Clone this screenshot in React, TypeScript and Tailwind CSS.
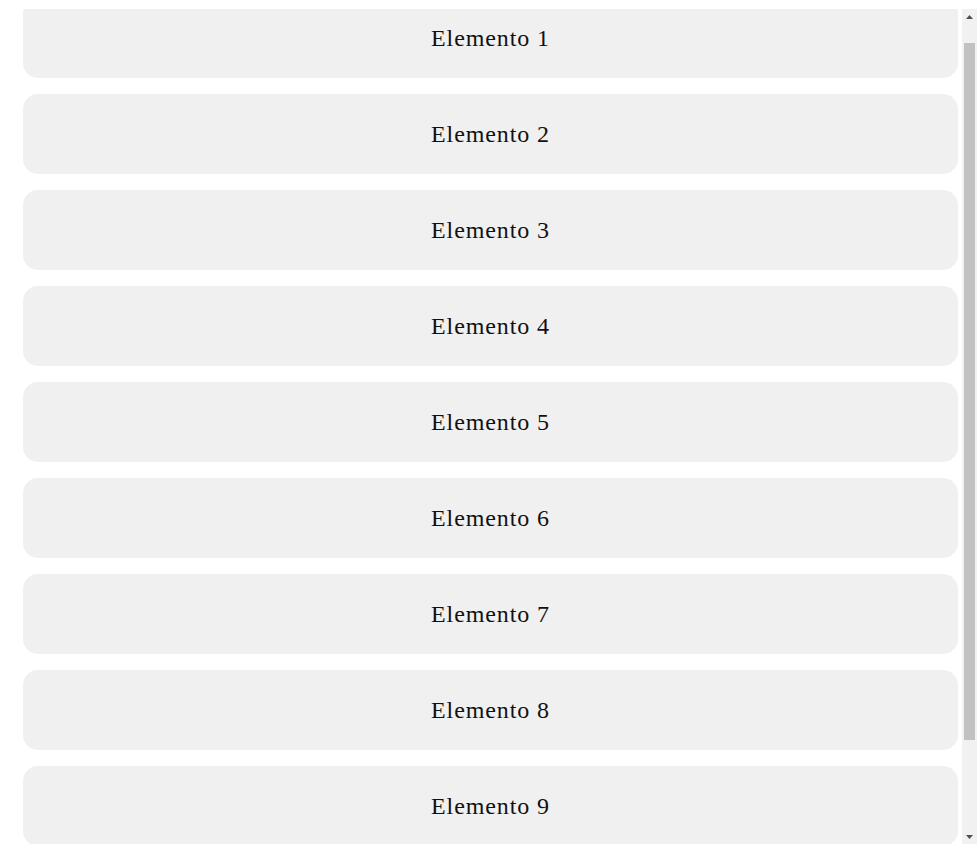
import React, { useEffect, useRef } from "react"

const items = Array.from({ length: 10 }, (_, i) => `Elemento ${i + 1}`)

function Scrollbar() {
  return (
    <div className="flex h-full w-[15px] shrink-0 flex-col bg-[#f1f1f1]">
      <div className="flex h-[15px] items-center justify-center">
        <svg width="7" height="4" viewBox="0 0 7 4">
          <path d="M3.5 0L7 4H0z" fill="#505050" />
        </svg>
      </div>
      <div className="flex-1 px-[2px]">
        <div className="mt-[19px] h-[697px] bg-[#c1c1c1]" />
      </div>
      <div className="flex h-[15px] items-center justify-center">
        <svg width="7" height="4" viewBox="0 0 7 4">
          <path d="M0 0h7L3.5 4z" fill="#505050" />
        </svg>
      </div>
    </div>
  )
}

export default function App() {
  const listRef = useRef<HTMLDivElement>(null)

  useEffect(() => {
    // the list in the shot is scrolled down a little
    if (listRef.current) listRef.current.scrollTop = 21
  }, [])

  return (
    <div className="bg-white pt-[9px] pl-[13px] pr-[2px]">
      <div className="flex h-[835px]">
        <div
          ref={listRef}
          className="flex-1 overflow-hidden pt-[10px] pb-[10px] pl-[10px] pr-[4px]"
        >
          <div className="flex flex-col gap-4 pb-[10px]">
            {items.map((label) => (
              <div
                key={label}
                className="flex h-20 shrink-0 items-center justify-center rounded-[15px] bg-[#f0f0f0] text-[24px] tracking-[0.9px] text-[#111]"
                style={{ fontFamily: '"Liberation Serif", "Times New Roman", serif' }}
              >
                {label}
              </div>
            ))}
          </div>
        </div>
        <Scrollbar />
      </div>
    </div>
  )
}
